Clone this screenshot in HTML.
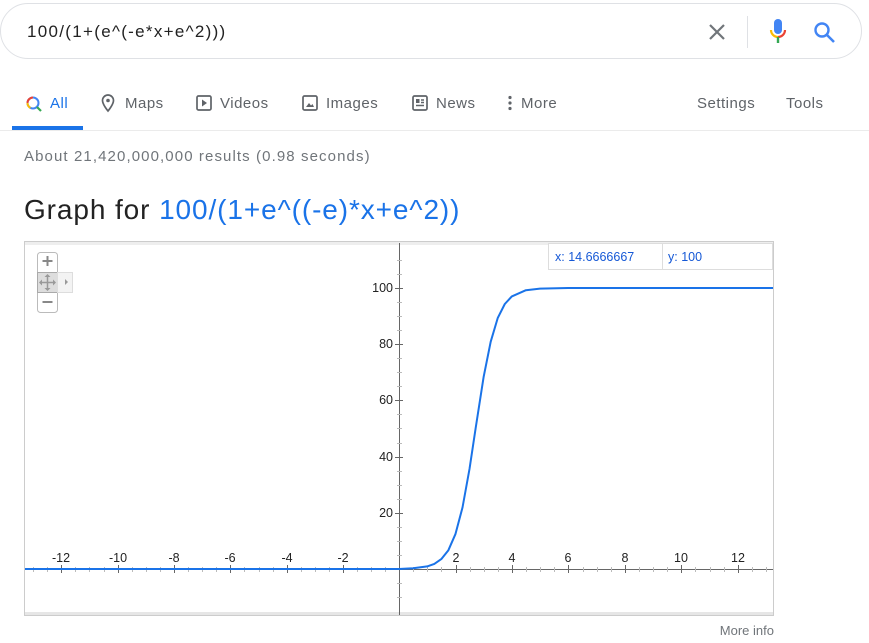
<!DOCTYPE html>
<html><head><meta charset="utf-8"><style>
body{margin:0;width:869px;height:643px;overflow:hidden;background:#fff;font-family:"Liberation Sans",Arial,sans-serif;position:relative}
.search{position:absolute;left:0;top:3px;width:862px;height:56px;border:1px solid #dfe1e5;border-radius:28px;box-sizing:border-box}
.q{position:absolute;left:26px;top:18px;font-size:17px;color:#222;letter-spacing:1.3px}
.nav{position:absolute;top:95px;font-size:15px;color:#5f6368;letter-spacing:0.5px}
.nav span{position:absolute;white-space:nowrap}
.abs{position:absolute}
</style></head><body>
<div class="search"><div class="q">100/(1+(e^(-e*x+e^2)))</div>
<svg class="abs" style="left:705px;top:17px" width="22" height="22"><path d="M4 4L18 18M18 4L4 18" stroke="#70757a" stroke-width="2.2"/></svg>
<div class="abs" style="left:746px;top:12px;width:1px;height:32px;background:#dfe1e5"></div>
<svg class="abs" style="left:766px;top:13px" width="22" height="32"><rect x="7" y="2" width="8" height="15" rx="4" fill="#4285f4"/><path d="M4 13a7 7 0 0 0 7 7" stroke="#fbbc05" stroke-width="2.2" fill="none"/><path d="M18 13a7 7 0 0 1-7 7" stroke="#ea4335" stroke-width="2.2" fill="none"/><path d="M11 20v6" stroke="#34a853" stroke-width="2.4"/></svg>
<svg class="abs" style="left:812px;top:17px" width="24" height="24"><circle cx="9" cy="9" r="6.5" stroke="#4285f4" stroke-width="2.4" fill="none"/><path d="M14 14l7 7" stroke="#4285f4" stroke-width="2.6"/></svg>
</div>
<div class="nav">
<svg class="abs" style="left:25px;top:0" width="18" height="18"><circle cx="8" cy="8" r="5.5" fill="none" stroke="#4285f4" stroke-width="2"/><path d="M8 2.5a5.5 5.5 0 0 0-5.5 5.5" stroke="#ea4335" stroke-width="2" fill="none"/><path d="M2.5 8a5.5 5.5 0 0 0 3 4.9" stroke="#fbbc05" stroke-width="2" fill="none"/><path d="M12 12l4 4" stroke="#34a853" stroke-width="2.2"/></svg>
<span style="left:50px;color:#1a73e8">All</span>
<svg class="abs" style="left:100px;top:-2px" width="16" height="20"><path d="M8 2a5.5 5.5 0 0 0-5.5 5.5C2.5 11.5 8 18 8 18s5.5-6.5 5.5-10.5A5.5 5.5 0 0 0 8 2z" fill="none" stroke="#5f6368" stroke-width="1.7"/><circle cx="8" cy="7.5" r="1.8" fill="#5f6368"/></svg>
<span style="left:125px">Maps</span>
<svg class="abs" style="left:196px;top:0" width="16" height="16"><rect x="1" y="1" width="14" height="14" rx="1.5" fill="none" stroke="#5f6368" stroke-width="1.7"/><path d="M6 4.5v7l5-3.5z" fill="#5f6368"/></svg>
<span style="left:220px">Videos</span>
<svg class="abs" style="left:302px;top:0" width="16" height="16"><rect x="1" y="1" width="14" height="14" rx="1.5" fill="none" stroke="#5f6368" stroke-width="1.7"/><path d="M4 12l3-4 2 2.5 1.5-1.5L12 12z" fill="#5f6368"/></svg>
<span style="left:326px">Images</span>
<svg class="abs" style="left:412px;top:0" width="16" height="16"><rect x="1" y="1" width="14" height="14" rx="1.5" fill="none" stroke="#5f6368" stroke-width="1.7"/><rect x="4" y="4" width="3.5" height="4" fill="#5f6368"/><path d="M9 5h3M9 7.5h3M4 10.5h8" stroke="#5f6368" stroke-width="1.4"/></svg>
<span style="left:436px">News</span>
<svg class="abs" style="left:507px;top:0" width="6" height="16"><circle cx="3" cy="2.5" r="1.6" fill="#5f6368"/><circle cx="3" cy="8" r="1.6" fill="#5f6368"/><circle cx="3" cy="13.5" r="1.6" fill="#5f6368"/></svg>
<span style="left:521px">More</span>
<span style="left:697px">Settings</span>
<span style="left:786px">Tools</span>
</div>
<div class="abs" style="left:12px;top:126px;width:71px;height:4px;background:#1a73e8"></div>
<div class="abs" style="left:0;top:130px;width:869px;height:1px;background:#ebebeb"></div>
<div class="abs" style="left:24px;top:148px;font-size:15px;color:#70757a;letter-spacing:1.1px">About 21,420,000,000 results (0.98 seconds)</div>
<div class="abs" style="left:24px;top:194px;font-size:28px;color:#222;letter-spacing:0.9px;white-space:nowrap">Graph for <span style="color:#1a73e8">100/(1+e^((-e)*x+e^2))</span></div>
<svg class="abs" style="left:0;top:0" width="869" height="643" font-family="Liberation Sans,Arial,sans-serif" font-size="12.5" fill="#222">
<rect x="24.5" y="241.5" width="749" height="374" fill="#fff" stroke="#ccc"/>
<rect x="25" y="242" width="748" height="3" fill="#eee"/>
<rect x="25" y="612" width="748" height="3" fill="#e6e6e6"/>
<g stroke="#666">
<path d="M26.5 569.5H773"/>
<path d="M399.5 243V615"/>
<path d="M61.5 565v8M118.5 565v8M174.5 565v8M230.5 565v8M287.5 565v8M343.5 565v8M456.5 565v8M512.5 565v8M568.5 565v8M625.5 565v8M681.5 565v8M738.5 565v8"/>
<path d="M395 288.5h8M395 344.5h8M395 400.5h8M395 457.5h8M395 513.5h8"/>
</g>
<g stroke="#bbb">
<path d="M33.5 567v5M47.5 567v5M75.5 567v5M89.5 567v5M104.5 567v5M132.5 567v5M146.5 567v5M160.5 567v5M188.5 567v5M202.5 567v5M216.5 567v5M244.5 567v5M259.5 567v5M273.5 567v5M301.5 567v5M315.5 567v5M329.5 567v5M357.5 567v5M371.5 567v5M385.5 567v5M413.5 567v5M427.5 567v5M441.5 567v5M470.5 567v5M484.5 567v5M498.5 567v5M526.5 567v5M540.5 567v5M554.5 567v5M583.5 567v5M597.5 567v5M611.5 567v5M639.5 567v5M653.5 567v5M667.5 567v5M695.5 567v5M710.5 567v5M724.5 567v5M752.5 567v5M766.5 567v5"/>
<path d="M397 260.5h5M397 274.5h5M397 302.5h5M397 316.5h5M397 330.5h5M397 358.5h5M397 372.5h5M397 386.5h5M397 414.5h5M397 428.5h5M397 443.5h5M397 471.5h5M397 485.5h5M397 499.5h5M397 527.5h5M397 541.5h5M397 555.5h5M397 583.5h5M397 597.5h5"/>
</g>
<g text-anchor="middle">
<text x="61" y="562">-12</text><text x="118" y="562">-10</text><text x="174" y="562">-8</text><text x="230" y="562">-6</text><text x="287" y="562">-4</text><text x="343" y="562">-2</text><text x="456" y="562">2</text><text x="512" y="562">4</text><text x="568" y="562">6</text><text x="625" y="562">8</text><text x="681" y="562">10</text><text x="738" y="562">12</text>
</g>
<g text-anchor="end">
<text x="393" y="292">100</text><text x="393" y="348">80</text><text x="393" y="404">60</text><text x="393" y="461">40</text><text x="393" y="517">20</text>
</g>
<polyline fill="none" stroke="#1a73e8" stroke-width="2" stroke-linejoin="round" points="25,569 399,569 413.1,568.3 427.2,566.4 434.3,563.9 441.3,559.1 448.4,550.2 455.4,534.2 462.5,507.5 469.5,469 475.6,428.5 483.6,377.1 490.7,341.7 497.7,318.1 504.8,304 511.8,296.4 525.9,290.2 540,288.6 568,288 773,288"/>
<rect x="548.5" y="243.5" width="224" height="26" fill="#fff" stroke="#ddd"/>
<path d="M662.5 244v25" stroke="#ddd"/>
<text x="555" y="261" fill="#1558d6" font-size="12.5">x: 14.6666667</text>
<text x="668" y="261" fill="#1558d6" font-size="12.5">y: 100</text>
<rect x="37.5" y="252.5" width="20" height="60" rx="3" fill="#fff" stroke="#bbb"/>
<rect x="37.5" y="272.5" width="20" height="20" fill="#ddd" stroke="#aaa"/>
<rect x="57.5" y="272.5" width="15" height="20" fill="#f3f3f3" stroke="#ddd"/>
<path d="M65 279v6l3-3z" fill="#999"/>
<path d="M47.5 256v10M42.5 261h10M42.5 302h10" stroke="#888" stroke-width="2"/>
<path d="M47.5 275v15M40 282.5h15" stroke="#999" stroke-width="1.5"/>
<path d="M47.5 274l-3 3h6zM47.5 291l-3-3h6zM39 282.5l3-3v6zM56 282.5l-3-3v6z" fill="#999"/>
<text x="774" y="635" text-anchor="end" fill="#70757a" font-size="13">More info</text>
</svg>
</body></html>
